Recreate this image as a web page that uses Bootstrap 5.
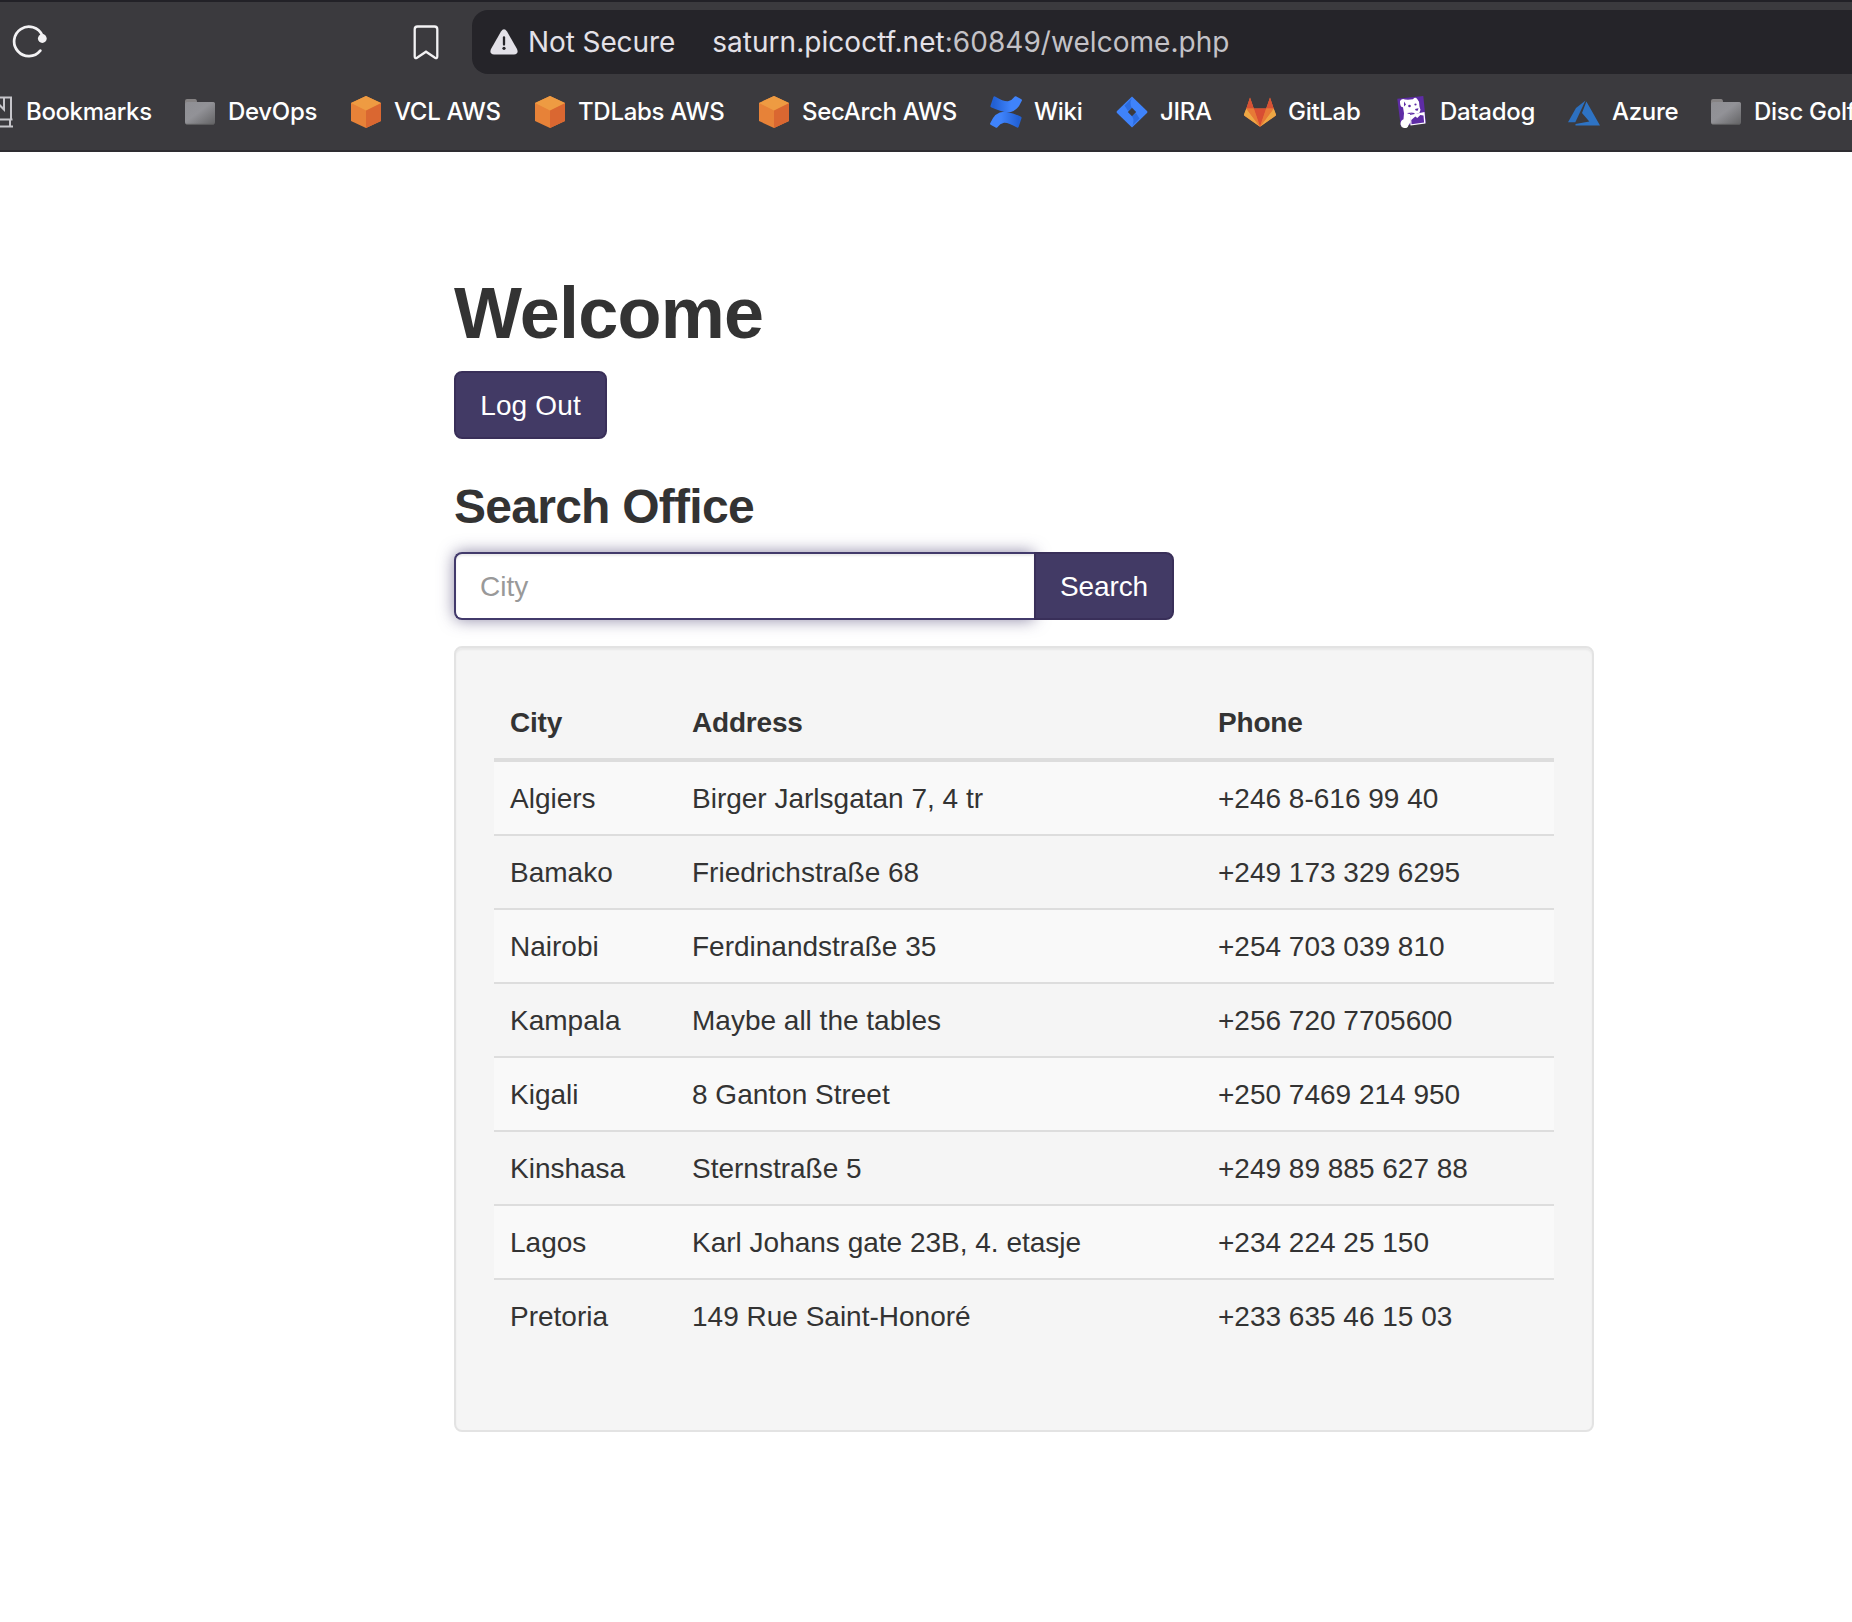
<!DOCTYPE html>
<html lang="en">
<head>
<meta charset="utf-8">
<title>Welcome</title>
<link href="https://cdn.jsdelivr.net/npm/bootstrap@5.3.0/dist/css/bootstrap.min.css" rel="stylesheet">
<style>
body{font-family:"Liberation Sans",Arial,sans-serif;font-size:28px;line-height:40px;color:#333;background:#fff;overflow:hidden}
.browser{height:152px;background:#3b3a3e;border-top:2px solid #222127;border-bottom:2px solid #2e2d31;font-family:Inter,sans-serif;color:#fff;overflow:hidden}
.toolbar-row{height:72px;padding:8px 0 0 12px}
.reload-icon{width:36px;height:36px;margin-top:12px}
.flag-icon{width:26px;height:36px;margin:15px 33px 0 auto}
.address{width:1380px;height:64px;background:#252429;border-radius:16px 0 0 16px;padding-left:18px;font-size:28px;color:#e3e1e8}
.address svg{width:28px;height:26px;margin-right:10px}
.address .notice{letter-spacing:-.1px}
.address .site{margin-left:37px;letter-spacing:.04px}
.address .path{color:#c3c2c7}
.marks{height:74px;margin-top:1px;font-size:24px;font-weight:500;letter-spacing:-.3px}
.mark-item{white-space:nowrap;flex:none}
.mark-item svg{width:32px;height:32px;margin-right:12px;flex:none}
.mark-item:nth-child(1){margin-left:-18px;width:202px;letter-spacing:-.38px}
.mark-item:nth-child(2){width:166px}
.mark-item:nth-child(3){width:184px}
.mark-item:nth-child(4){width:224px}
.mark-item:nth-child(5){width:232px}
.mark-item:nth-child(6){width:126px}
.mark-item:nth-child(7){width:128px}
.mark-item:nth-child(8){width:152px}
.mark-item:nth-child(9){width:172px}
.mark-item:nth-child(10){width:142px}
.page{width:1140px;margin:0 0 0 454px;padding-top:122px}
h1{font-size:72px;line-height:79px;font-weight:700;margin:0 0 18px;letter-spacing:-.8px}
h2{font-size:48px;line-height:53px;font-weight:700;margin:41px 0 19px;letter-spacing:-.74px}
.btn-violet{--bs-btn-color:#fff;--bs-btn-bg:#423a65;--bs-btn-border-color:#392f59;--bs-btn-hover-color:#fff;--bs-btn-hover-bg:#392f59;font-size:28px;line-height:40px;border-width:2px;border-radius:8px;padding:13px 0 11px;height:68px}
.logout{width:153px;letter-spacing:.15px}
.find{width:140px;margin-left:0!important;letter-spacing:-.1px}
.input-group{width:720px}
.input-group .form-control{height:68px;border:2px solid #423a6b;border-right:0;border-radius:8px;font-size:28px;line-height:40px;padding:13px 24px 11px;box-shadow:inset 0 2px 2px rgba(0,0,0,.075),0 0 16px rgba(66,58,107,.6)}
.form-control::placeholder{color:#999;opacity:1}
.well{margin-top:26px;height:786px;background:#f5f5f5;border:2px solid #e3e3e3;border-radius:8px;padding:38px;box-shadow:inset 0 2px 2px rgba(0,0,0,.05)}
.office-table{width:1060px;table-layout:fixed;border-collapse:separate;border-spacing:0;margin:0;color:#333}
.office-table th,.office-table td{padding:17px 16px 15px;height:74px;border:0;border-top:2px solid #ddd;line-height:40px;background:none;box-shadow:none;color:#333}
.office-table th{border-top:0;border-bottom:4px solid #ddd;height:76px;letter-spacing:-.2px}
.office-table tbody tr:first-child td{border-top:0;height:72px}
.office-table tbody tr:nth-child(odd) td{background:#f9f9f9}
.col-city{width:182px}
.col-address{width:526px}
</style>
<script src="https://cdn.jsdelivr.net/npm/bootstrap@5.3.0/dist/js/bootstrap.bundle.min.js"></script>
</head>
<body>
<svg width="0" height="0" class="position-absolute">
<defs>
<linearGradient id="fg" x1="0" y1="0" x2="1" y2="1"><stop offset="0" stop-color="#8f8f94"/><stop offset=".45" stop-color="#929297"/><stop offset="1" stop-color="#626264"/></linearGradient>
<linearGradient id="cg" x1="0" y1="0" x2="1" y2="0"><stop offset=".1" stop-color="#2260d3"/><stop offset=".65" stop-color="#3f83fb"/></linearGradient>
<linearGradient id="ch" x1="0" y1="0" x2="1" y2="0"><stop offset=".35" stop-color="#3f83fb"/><stop offset=".9" stop-color="#2260d3"/></linearGradient>
<symbol id="folder" viewBox="0 0 32 32"><path d="M1 8V5q0-2 2-2h8q2 0 2 3h16q2 0 2 2v2H1z" fill="#858283"/><rect x="1" y="6" width="30" height="22.500" rx="2.500" fill="url(#fg)"/><path d="M2 28.300h28" stroke="#5d5d60" stroke-width=".8"/></symbol>
<symbol id="cube" viewBox="0 0 32 32"><path d="M16 0 31 7v18l-15 7L1 25V7z" fill="#e78238"/><path d="M16 14 31 7v18l-15 7z" fill="#da6731"/><path d="M16 0 31 7l-15 7.500L1 7z" fill="#ee9b42"/></symbol>
</defs>
</svg>
<header class="browser">
<div class="toolbar-row d-flex align-items-start">
<svg class="reload-icon" viewBox="0 0 36 36" fill="none"><path d="M28.300 28.600A14.700 14.700 0 1 1 30.300 13.500" stroke="#f3f2f4" stroke-width="2.700" stroke-linecap="round"/><circle cx="30.300" cy="16.500" r="4.400" fill="#f3f2f4"/></svg>
<svg class="flag-icon" viewBox="0 0 26 36" fill="none"><path d="M4.500 1.500h17q2.800 0 2.800 2.800v27q0 2.800-2.300 1.400L13 26.700l-9 6q-2.300 1.400-2.300-1.400v-27q0-2.800 2.800-2.800z" stroke="#f3f2f4" stroke-width="2.300"/></svg>
<div class="address d-flex align-items-center"><svg viewBox="0 0 28 26"><path d="M11 2.500q3-4.500 6 0l10 17.500q2 5-3 5.500H4q-5-.500-3-5.500z" fill="#e3e1e8"/><path d="M14 8.500v7" stroke="#252429" stroke-width="2.300" stroke-linecap="round"/><circle cx="14" cy="19.300" r="1.600" fill="#252429"/></svg><span class="notice">Not Secure</span><span class="site">saturn.picoctf.net<span class="path">:60849/welcome.php</span></span></div>
</div>
<nav class="marks d-flex align-items-center">
<div class="mark-item d-flex align-items-center"><svg viewBox="0 0 32 32" fill="none" stroke="#c6c5ca" stroke-width="2"><path d="M0 1.500h29v22M22 1.500v12l-4-4-4 4M0 23.500h30.500M28 24v6M0 30.500h31"/></svg><span>Bookmarks</span></div>
<div class="mark-item d-flex align-items-center"><svg><use href="#folder"/></svg><span>DevOps</span></div>
<div class="mark-item d-flex align-items-center"><svg><use href="#cube"/></svg><span>VCL AWS</span></div>
<div class="mark-item d-flex align-items-center"><svg><use href="#cube"/></svg><span>TDLabs AWS</span></div>
<div class="mark-item d-flex align-items-center"><svg><use href="#cube"/></svg><span>SecArch AWS</span></div>
<div class="mark-item d-flex align-items-center"><svg viewBox="0 0 32 32"><path d="M5 .500Q14 5.800 18 5.300 22 4.500 24.800.600q.6-.7 1.600-.2l5 2.800q.9.600.4 1.600Q27 16.300 18 16.300 12 16.300 1 11.300q-.8-.5-.5-1.500L3.400 1Q4 0 5 .500z" fill="url(#cg)"/><path d="M27 31.500Q18 26.200 14 26.700 10 27.500 7.200 31.400q-.6.7-1.600.2l-5-2.800q-.9-.6-.4-1.600Q5 15.700 14 15.700q6 0 17 5 .8.5.5 1.500L28.600 31q-.6 1-1.600.5z" fill="url(#ch)"/></svg><span>Wiki</span></div>
<div class="mark-item d-flex align-items-center"><svg viewBox="0 0 32 32"><path d="M16 .500 31 15q1 1 0 2L16 31.500 1 17q-1-1 0-2z" fill="#3f83fb"/><path d="M16 2q-3 5 0 10l-4 3-3.500-5.500zM16 30q3-5 0-10l4-3 3.500 5.500z" fill="#2c6ce0"/><path d="m16 11.800 4.200 4.200-4.200 4.200-4.200-4.200z" fill="#3b3a3e"/></svg><span>JIRA</span></div>
<div class="mark-item d-flex align-items-center"><svg viewBox="0 0 32 32"><path d="M6 1.500 9.800 12.500h12.400L26 1.500 32 19.500 16 30.700 0 19.500z" fill="#e8713a"/><path d="M6 1.500 9.800 12.500H2.300zM26 1.500l3.700 11h-7.500z" fill="#d65235"/><path d="M9.800 12.500h12.400L16 30.700z" fill="#d84e33"/><path d="M2.300 12.500 16 30.700.500 19.800Q-.2 19 .1 18zM29.700 12.500 16 30.700l15.500-10.900q.7-.8.4-1.800z" fill="#eda744"/><path d="M2.300 12.500h7.500L16 30.700zM29.700 12.500h-7.500L16 30.700z" fill="#e77a36"/></svg><span>GitLab</span></div>
<div class="mark-item d-flex align-items-center"><svg viewBox="0 0 32 32"><path d="M1.300 2.700 27.300 0 30 27 4.700 30.300z" fill="#5e2ca5"/><path d="M4 5q2-3 5-1.500l3 .3 5-.6q2-2.500 4-.5l2 3 .5 5 1 3-1 3-4 1.500-2-1.500-3.500 1 .5 3.500v5l-2 3q-.5 3-3.500 3-4-.5-4.500-4 0-4 3-5l.5-6-1-6q-3 0-3-5z" fill="#fff"/><path d="m14 19 14.500-3 1 11.500-15 2z" fill="#fff"/><path d="m15.300 24 4-3.500 2 1.500 3-3 3.200.5.6 7-12.600 1.700z" fill="#5e2ca5"/><circle cx="13.500" cy="10" r="1.300" fill="#5e2ca5"/><circle cx="19.500" cy="8.500" r="1.100" fill="#5e2ca5"/><path d="m19 13 3.500-.7-.8 2.500-2-.3zM8 5.500l2 3-2 2zM11 17q3 2 6-.5" fill="#5e2ca5"/></svg><span>Datadog</span></div>
<div class="mark-item d-flex align-items-center"><svg viewBox="0 0 32 32"><path d="M17.500 4.500 8 12 0 26.300h7.300z" fill="#2c70c0"/><path d="m18.400 5.500-4.400 11.500 7.300 8.500L7.500 28v1.500H32z" fill="#2e73c4"/></svg><span>Azure</span></div>
<div class="mark-item d-flex align-items-center"><svg><use href="#folder"/></svg><span>Disc Golf</span></div>
</nav>
</header>
<main class="page">
<h1>Welcome</h1>
<button class="btn btn-violet logout d-block">Log Out</button>
<h2>Search Office</h2>
<div class="input-group"><input class="form-control" placeholder="City"><button class="btn btn-violet find">Search</button></div>
<div class="well">
<table class="table office-table">
<colgroup><col class="col-city"><col class="col-address"><col></colgroup>
<thead><tr><th>City</th><th>Address</th><th>Phone</th></tr></thead>
<tbody>
<tr><td>Algiers</td><td>Birger Jarlsgatan 7, 4 tr</td><td>+246 8-616 99 40</td></tr>
<tr><td>Bamako</td><td>Friedrichstraße 68</td><td>+249 173 329 6295</td></tr>
<tr><td>Nairobi</td><td>Ferdinandstraße 35</td><td>+254 703 039 810</td></tr>
<tr><td>Kampala</td><td>Maybe all the tables</td><td>+256 720 7705600</td></tr>
<tr><td>Kigali</td><td>8 Ganton Street</td><td>+250 7469 214 950</td></tr>
<tr><td>Kinshasa</td><td>Sternstraße 5</td><td>+249 89 885 627 88</td></tr>
<tr><td>Lagos</td><td>Karl Johans gate 23B, 4. etasje</td><td>+234 224 25 150</td></tr>
<tr><td>Pretoria</td><td>149 Rue Saint-Honoré</td><td>+233 635 46 15 03</td></tr>
</tbody>
</table>
</div>
</main>
</body>
</html>
